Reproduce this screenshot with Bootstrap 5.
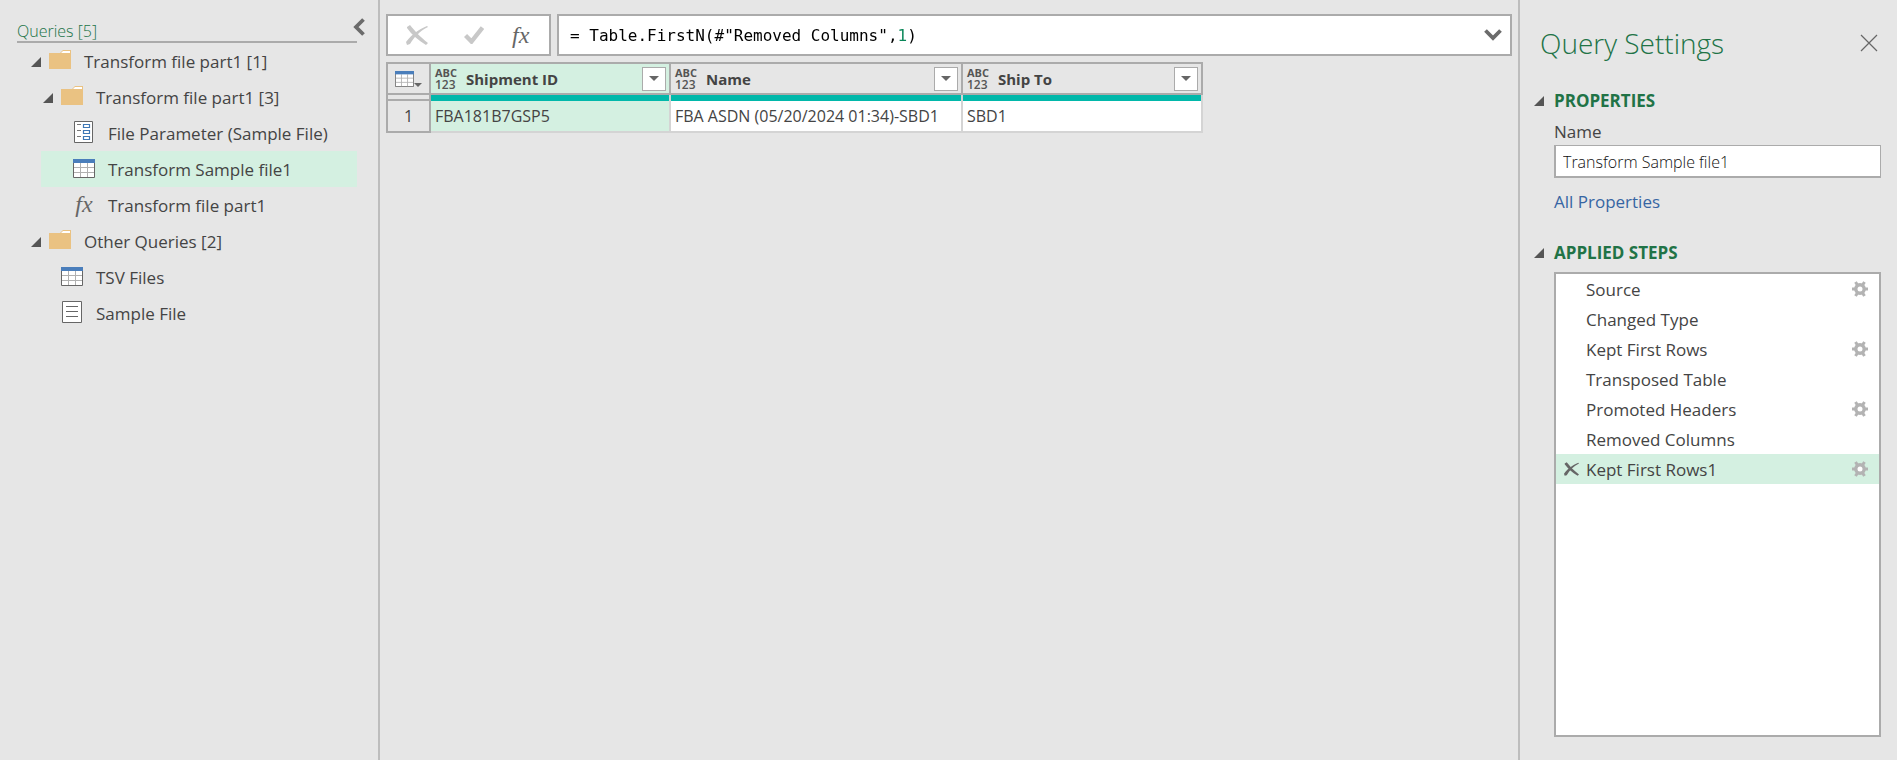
<!DOCTYPE html>
<html lang="en">
<head>
<meta charset="utf-8">
<meta name="viewport" content="width=device-width, initial-scale=1">
<title>Power Query Editor</title>
<link href="https://cdn.jsdelivr.net/npm/bootstrap@5.3.0/dist/css/bootstrap.min.css" rel="stylesheet">
<style>
  :root { --edge: #ababab; --pane: #e6e6e6; --pick: #d4f0e1; --ink: #444; --green: #217346; }
  body { background: var(--pane); color: var(--ink); font: 17px/24px "Open Sans", "Noto Sans", sans-serif; }
  button { background: none; border: 0; padding: 0; color: inherit; }
  svg { display: block; flex: none; }
  .queries-pane { width: 380px; border-right: 2px solid #bdbdbd; padding: 12px 21px 0 17px; }
  .queries-head { height: 31px; border-bottom: 2px solid var(--edge); padding-top: 7px; }
  .queries-head h1 { font-size: 16px; line-height: 24px; font-weight: 300; color: var(--green); }
  .collapse-btn { right: -8px; top: 6px; }
  .tree-row { height: 36px; padding-top: 2px; color: var(--ink); text-decoration: none; }
  .tree-row.lvl0 { margin-left: 14px; }
  .tree-row.lvl1 { margin-left: 26px; }
  .tree-row.leaf1 { margin-left: 24px; padding-left: 20px; }
  .tree-row.leaf2 { margin-left: 24px; padding-left: 32px; }
  .tree-row.active { background: var(--pick); }
  .tree-row .twist { margin-right: 8px; }
  .tree-row .glyph { margin: 0 13px 4px 0; }
  .tree-row .fx-mark { width: 22px; text-align: center; }
  .editor { padding: 14px 6px 0 6px; min-width: 0; }
  .formula-bar { gap: 6px; margin-bottom: 6px; }
  .boxed { height: 42px; background: #fff; border: 2px solid var(--edge); }
  .formula-btns { width: 165px; padding-left: 18px; }
  .formula-btns button:nth-child(2) { margin: 0 28px 0 36px; }
  /* the literal at the end of the formula is tinted like a number token */
  .formula-input { border: 0; outline: 0; padding: 2px 0 0; margin-left: 11px; color: #000; font: 16px/24px "DejaVu Sans Mono", monospace;
    background: linear-gradient(90deg, #000 34ch, #098658 34ch 35ch, #000 35ch); -webkit-background-clip: text; background-clip: text; -webkit-text-fill-color: transparent; caret-color: #000; }
  .fx-mark { font: italic 24px/24px "Liberation Serif", serif; color: #666; }
  .preview { border-collapse: separate; border-spacing: 0; table-layout: fixed; width: 817px; font-size: 16px; line-height: 20px; }
  .preview th, .preview td { padding: 0; border: 0 solid var(--edge); }
  .preview thead th { height: 33px; border-width: 2px 2px 2px 0; font-size: 15px; }
  .preview tr > :first-child { border-left-width: 2px; text-align: center; }
  .preview .quality td { height: 6px; background: #01b8aa; border-right: 2px solid #d4d4d4; line-height: 0; }
  .preview .quality td:first-child { background: var(--pane); border-right-color: var(--edge); border-bottom-width: 2px; }
  .preview .data-row td { height: 32px; background: #fff; border: solid #d4d4d4; border-width: 0 2px 2px 0; padding-left: 4px; }
  .preview .data-row th { border-width: 0 2px 2px 2px; font-weight: 400; }
  .preview .data-row td.picked, .preview th.picked { background: var(--pick); }
  .col-head { padding: 0 3px 0 4px; }
  .type-tag { width: 31px; font-size: 11px; line-height: 12px; font-weight: 700; color: #555; }
  .type-tag span { display: block; }
  .type-tag .digits { font-size: 12px; font-weight: 600; }
  .drop-btn { width: 24px; height: 24px; background: #fff; border: 1px solid var(--edge); }
  .settings-pane { width: 379px; border-left: 2px solid #bdbdbd; padding: 0 16px 23px 14px; }
  .settings-top { padding: 25px 3px 0 6px; margin-bottom: 28px; }
  .settings-title { font-size: 28px; line-height: 36px; font-weight: 300; color: var(--green); }
  .section-head { font-size: 17px; line-height: 24px; font-weight: 700; color: var(--green); gap: 10px; margin: 0 0 7px; }
  .section-body { margin-left: 20px; }
  .name-box { height: 33px; margin-top: 1px; border: 2px solid var(--edge); border-top-width: 1px; border-right-width: 1px; border-radius: 0; padding: 2px 7px 0; background: #fff; color: #111; font-size: 16px; font-weight: 300; }
  .props-link { color: #3765a3; text-decoration: none; margin: 12px 0 27px; }
  .steps { border: 2px solid var(--edge); background: #fff; }
  .step-row { height: 30px; padding: 2px 11px 0 30px; line-height: 24px; }
  .step-row button { margin-bottom: 2px; }
  .step-row.active { background: var(--pick); padding-left: 8px; }
  .step-row .delete-btn { margin-right: 7px; }
</style>
</head>
<body>
<svg width="0" height="0" class="position-absolute" aria-hidden="true">
  <defs>
    <symbol id="twist" viewBox="0 0 10 10"><path d="M10 0V10H0Z" fill="#555"/></symbol>
    <symbol id="folder" viewBox="0 0 22 20"><path d="M0 3H11L14 0H22V19H0Z" fill="#eac282"/><path d="M12 3L14 1H21V3Z" fill="#fff"/></symbol>
    <symbol id="grid" viewBox="0 0 22 19"><path d="M.5 .5H21.500V18.500H.5Z" fill="#fff" stroke="#666"/><path d="M7.500 4V18M14.500 4V18M1 8.500H21M1 13.500H21" stroke="#b0b0b0"/><path d="M0 0H22V4H0Z" fill="#4a7ebb"/></symbol>
    <symbol id="param" viewBox="0 0 20 22"><path d="M.5 .5H18.500V21.500H.5Z" fill="#fff" stroke="#666"/><path d="M3 3.500H7M3 9.500H7M3 15.500H7" stroke="#777"/><path d="M9.500 3.500H15.500V6.500H9.500ZM9.500 9.500H15.500V12.500H9.500ZM9.500 15.500H15.500V18.500H9.500Z" fill="none" stroke="#3f78b5" stroke-width="1.200"/></symbol>
    <symbol id="doc" viewBox="0 0 20 22"><path d="M.5 .5H19.500V21.500H.5Z" fill="#fff" stroke="#666"/><path d="M4 5.500H16M4 10.500H16M4 15.500H16" stroke="#666"/></symbol>
    <symbol id="gear" viewBox="0 0 16 16"><path d="M0 8H16M3.500 1L12.500 15M12.500 1L3.500 15" stroke="#b3b3b3" stroke-width="3"/><circle cx="8" cy="8" r="4.200" fill="#fff" stroke="#b3b3b3" stroke-width="3.400"/></symbol>
    <symbol id="cross" viewBox="0 0 22 20"><path d="M1 2L4 0C8 5 14 12 22 18L20 20C12 15 6 10 1 3Z"/><path d="M22 2C14 6 8 12 4 19L1 20L0 17C6 9 12 5 21 1Z"/></symbol>
    <symbol id="drop" viewBox="0 0 10 5"><path d="M0 0H10L5 5Z" fill="#666"/></symbol>
  </defs>
</svg>
<div class="d-flex min-vh-100">
  <nav class="queries-pane flex-shrink-0" aria-label="Queries">
    <div class="queries-head position-relative">
      <h1 class="m-0">Queries [5]</h1>
      <button class="collapse-btn position-absolute" aria-label="Collapse"><svg width="12" height="18" viewBox="0 0 12 18"><path d="M10.500 1.500L3 9L10.500 16.500" fill="none" stroke="#6b6b6b" stroke-width="3.800"/></svg></button>
    </div>
    <a href="#" class="tree-row lvl0 d-flex align-items-center"><svg class="twist" width="10" height="10"><use href="#twist"/></svg><svg class="glyph" width="22" height="20"><use href="#folder"/></svg>Transform file part1 [1]</a>
    <a href="#" class="tree-row lvl1 d-flex align-items-center"><svg class="twist" width="10" height="10"><use href="#twist"/></svg><svg class="glyph" width="22" height="20"><use href="#folder"/></svg>Transform file part1 [3]</a>
    <a href="#" class="tree-row leaf2 d-flex align-items-center"><svg class="glyph" width="22" height="22"><use href="#param"/></svg>File Parameter (Sample File)</a>
    <a href="#" class="tree-row leaf2 active d-flex align-items-center"><svg class="glyph" width="22" height="19"><use href="#grid"/></svg>Transform Sample file1</a>
    <a href="#" class="tree-row leaf2 d-flex align-items-center"><span class="glyph fx-mark">fx</span>Transform file part1</a>
    <a href="#" class="tree-row lvl0 d-flex align-items-center"><svg class="twist" width="10" height="10"><use href="#twist"/></svg><svg class="glyph" width="22" height="20"><use href="#folder"/></svg>Other Queries [2]</a>
    <a href="#" class="tree-row leaf1 d-flex align-items-center"><svg class="glyph" width="22" height="19"><use href="#grid"/></svg>TSV Files</a>
    <a href="#" class="tree-row leaf1 d-flex align-items-center"><svg class="glyph" width="22" height="22"><use href="#doc"/></svg>Sample File</a>
  </nav>

  <main class="editor flex-grow-1">
    <div class="d-flex formula-bar">
      <div class="boxed formula-btns d-flex align-items-center flex-shrink-0">
        <button aria-label="Cancel"><svg width="22" height="20" fill="#c8c8c8"><use href="#cross"/></svg></button>
        <button aria-label="Apply"><svg width="20" height="18" viewBox="0 0 20 18"><path d="M1.500 9.500L7.500 15.500L18.500 1.500" fill="none" stroke="#c8c8c8" stroke-width="4.400"/></svg></button>
        <button class="fx-mark" aria-label="Insert step">fx</button>
      </div>
      <div class="boxed d-flex align-items-center flex-grow-1">
        <input class="formula-input flex-grow-1" aria-label="Formula" value='= Table.FirstN(#"Removed Columns",1)'>
        <button class="me-2" aria-label="Expand formula bar"><svg width="18" height="12" viewBox="0 0 18 12"><path d="M1.500 1.500L9 9L16.500 1.500" fill="none" stroke="#6b6b6b" stroke-width="3.800"/></svg></button>
      </div>
    </div>
    <table class="preview">
      <colgroup><col style="width:45px"><col style="width:240px"><col style="width:292px"><col style="width:240px"></colgroup>
      <thead><tr>
        <th><button class="d-flex w-100 align-items-end justify-content-center" aria-label="Table menu"><svg width="19" height="16" viewBox="0 0 22 19" preserveAspectRatio="none"><use href="#grid" width="22" height="19"/></svg><svg width="8" height="4"><use href="#drop"/></svg></button></th>
        <th class="picked"><div class="col-head d-flex align-items-center"><div class="type-tag"><span>ABC</span><span class="digits">123</span></div><span class="flex-grow-1">Shipment ID</span><button class="drop-btn d-flex align-items-center justify-content-center" aria-label="Filter Shipment ID"><svg width="10" height="5"><use href="#drop"/></svg></button></div></th>
        <th><div class="col-head d-flex align-items-center"><div class="type-tag"><span>ABC</span><span class="digits">123</span></div><span class="flex-grow-1">Name</span><button class="drop-btn d-flex align-items-center justify-content-center" aria-label="Filter Name"><svg width="10" height="5"><use href="#drop"/></svg></button></div></th>
        <th><div class="col-head d-flex align-items-center"><div class="type-tag"><span>ABC</span><span class="digits">123</span></div><span class="flex-grow-1">Ship To</span><button class="drop-btn d-flex align-items-center justify-content-center" aria-label="Filter Ship To"><svg width="10" height="5"><use href="#drop"/></svg></button></div></th>
      </tr></thead>
      <tbody>
        <tr class="quality"><td></td><td></td><td></td><td></td></tr>
        <tr class="data-row"><th scope="row">1</th><td class="picked">FBA181B7GSP5</td><td>FBA ASDN (05/20/2024 01:34)-SBD1</td><td>SBD1</td></tr>
      </tbody>
    </table>
  </main>

  <aside class="settings-pane d-flex flex-column flex-shrink-0">
    <div class="d-flex align-items-center settings-top">
      <h2 class="settings-title m-0 flex-grow-1">Query Settings</h2>
      <button aria-label="Close"><svg width="18" height="18" viewBox="0 0 18 18"><path d="M1 1L17 17M17 1L1 17" stroke="#666" stroke-width="1.200"/></svg></button>
    </div>
    <h3 class="section-head d-flex align-items-center"><svg width="10" height="10"><use href="#twist"/></svg>PROPERTIES</h3>
    <div class="section-body">
      <label for="qname" class="d-block">Name</label>
      <input id="qname" class="name-box w-100 d-block" value="Transform Sample file1">
      <a href="#" class="props-link d-inline-block">All Properties</a>
    </div>
    <h3 class="section-head d-flex align-items-center"><svg width="10" height="10"><use href="#twist"/></svg>APPLIED STEPS</h3>
    <div class="section-body steps flex-grow-1">
      <div class="step-row d-flex align-items-center justify-content-between">Source<button aria-label="Edit Source"><svg width="16" height="16"><use href="#gear"/></svg></button></div>
      <div class="step-row d-flex align-items-center">Changed Type</div>
      <div class="step-row d-flex align-items-center justify-content-between">Kept First Rows<button aria-label="Edit Kept First Rows"><svg width="16" height="16"><use href="#gear"/></svg></button></div>
      <div class="step-row d-flex align-items-center">Transposed Table</div>
      <div class="step-row d-flex align-items-center justify-content-between">Promoted Headers<button aria-label="Edit Promoted Headers"><svg width="16" height="16"><use href="#gear"/></svg></button></div>
      <div class="step-row d-flex align-items-center">Removed Columns</div>
      <div class="step-row active d-flex align-items-center"><button class="delete-btn" aria-label="Delete"><svg width="15" height="14" fill="#666"><use href="#cross"/></svg></button><span class="flex-grow-1">Kept First Rows1</span><button aria-label="Edit Kept First Rows1"><svg width="16" height="16"><use href="#gear"/></svg></button></div>
    </div>
  </aside>
</div>
<script src="https://cdn.jsdelivr.net/npm/bootstrap@5.3.0/dist/js/bootstrap.bundle.min.js"></script>
</body>
</html>
